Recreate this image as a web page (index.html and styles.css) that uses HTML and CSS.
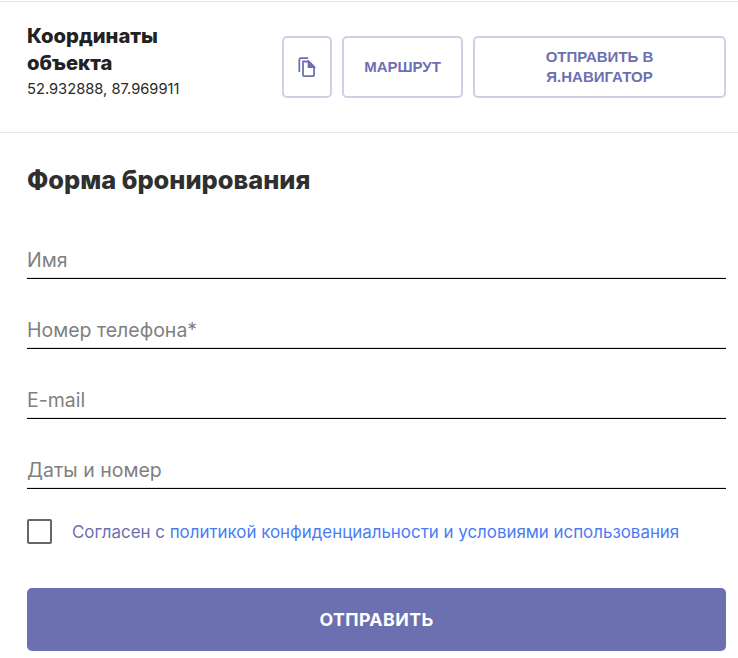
FILE: index.html
```html
<!DOCTYPE html>
<html lang="ru">

<head>
  <meta charset="utf-8">
  <title>Форма бронирования</title>
  <link rel="stylesheet" href="styles.css">
</head>

<body>
  <section class="coords">
    <div class="coords-info">
      <h3 class="coords-title">Координаты объекта</h3>
      <div class="coords-value">52.932888, 87.969911</div>
    </div>
    <div class="coords-actions">
      <button class="btn-outline btn-copy" type="button" aria-label="Копировать">
        <svg width="20" height="22" viewBox="0 0 18 20" fill="none" stroke="#6c70b0" stroke-width="1.6">
          <path d="M2 14.5V3.4C2 2.6 2.6 2 3.4 2H10" />
          <path d="M5.4 5H10.6L15.4 9.6V17.2C15.4 17.9 14.9 18.4 14.2 18.4H6.6C5.9 18.4 5.4 17.9 5.4 17.2Z" />
          <path d="M10.4 5L15.4 10H10.4Z" fill="#6c70b0" />
        </svg>
      </button>
      <button class="btn-outline btn-route" type="button">Маршрут</button>
      <button class="btn-outline btn-nav" type="button">Отправить в<br>Я.Навигатор</button>
    </div>
  </section>

  <form class="booking">
    <h2 class="booking-title">Форма бронирования</h2>
    <input class="field" type="text" placeholder="Имя">
    <input class="field" type="text" placeholder="Номер телефона*">
    <input class="field" type="text" placeholder="E-mail">
    <input class="field" type="text" placeholder="Даты и номер">
    <label class="agree">
      <span class="agree-box"></span>
      <span class="agree-text">Согласен с <a href="#">политикой конфиденциальности и условиями использования</a></span>
    </label>
    <button class="btn-submit" type="button">Отправить</button>
  </form>
</body>

</html>
```

FILE: styles.css
```css
* {
  box-sizing: border-box;
}

body {
  margin: 0;
  background: #fff;
  font-family: Inter, "Noto Sans", sans-serif;
  color: #2f2f2f;
}

.coords {
  margin-top: 1px;
  height: 132px;
  padding: 0 12px 0 27px;
  display: flex;
  align-items: center;
  justify-content: space-between;
  border-top: 1px solid #e6e6ea;
  border-bottom: 1px solid #e6e6ea;
}

.coords-info {
  margin-bottom: 13px;
}

.coords-title {
  margin: 0;
  width: 170px;
  font-size: 20.2px;
  line-height: 27px;
  font-weight: 800;
  color: #222;
}

.coords-value {
  margin-top: 3px;
  font-size: 14.7px;
  line-height: 20px;
  color: #2a2a2a;
}

.coords-actions {
  display: flex;
  gap: 10px;
}

.btn-outline {
  height: 62px;
  padding: 0;
  display: flex;
  align-items: center;
  justify-content: center;
  background: #fff;
  border: 2px solid #cfd0e6;
  border-radius: 5px;
  font-family: "Liberation Sans", Arial, sans-serif;
  font-size: 15px;
  line-height: 20px;
  font-weight: 700;
  text-transform: uppercase;
  color: #6c70b0;
}

.btn-copy {
  width: 50px;
}

.btn-route {
  width: 121px;
}

.btn-nav {
  width: 253px;
}

.booking {
  padding: 0 12px 0 27px;
}

.booking-title {
  margin: 0;
  padding-top: 29px;
  font-size: 25.4px;
  line-height: 36px;
  font-weight: 800;
  color: #2f2f2f;
}

.field {
  display: block;
  width: 100%;
  height: 34px;
  margin-top: 36px;
  padding: 0 0 4px;
  border: 0;
  border-bottom: 1px solid #000;
  box-shadow: inset 0 -1px 0 #e3e3e3;
  font-family: Inter, "Noto Sans", sans-serif;
  font-size: 19.5px;
  outline: none;
}

.booking-title + .field {
  margin-top: 47px;
}

.field::placeholder {
  color: #7f7f7f;
  opacity: 1;
}

.agree {
  margin-top: 30px;
  display: flex;
  align-items: center;
  gap: 20px;
}

.agree-box {
  width: 25px;
  height: 25px;
  border: 2px solid #666;
  border-radius: 2px;
}

.agree-text {
  font-size: 16.9px;
  color: #6c70b0;
}

.agree-text a {
  color: #4a7cf6;
  text-decoration: none;
}

.btn-submit {
  display: block;
  width: 100%;
  height: 63px;
  margin-top: 44px;
  border: 0;
  border-radius: 5px;
  background: #6c70b0;
  font-family: Inter, "Noto Sans", sans-serif;
  font-size: 17.8px;
  font-weight: 700;
  letter-spacing: 0.4px;
  text-transform: uppercase;
  color: #fff;
}
```
